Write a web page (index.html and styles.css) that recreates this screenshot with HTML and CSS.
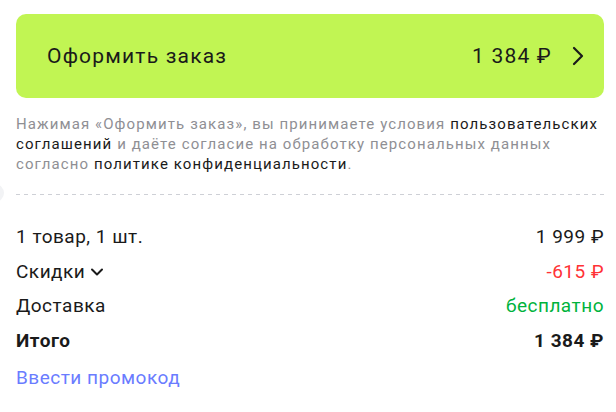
FILE: index.html
```html
<!DOCTYPE html>
<html lang="ru">
<head>
    <meta charset="UTF-8">
    <meta name="viewport" content="width=device-width, initial-scale=1.0">
    <title>Оформление заказа</title>
    <link rel="stylesheet" href="styles.css">
</head>
<body>
 <div class="checkout">
    <button class="checkout-submit" type="button">
        <span class="checkout-submit__title">Оформить заказ</span>
        <span class="checkout-submit__price">1 384 ₽</span>
        <svg class="checkout-submit__arrow" width="12" height="20" viewBox="0 0 12 20">
            <path d="M2 2l8 8-8 8" fill="none" stroke="#1a1a1a" stroke-width="2.2" stroke-linecap="round" stroke-linejoin="round"/>
        </svg>
    </button>

    <p class="checkout-terms">
        Нажимая «Оформить заказ», вы принимаете условия <a href="#">пользовательских соглашений</a>
        и даёте согласие на обработку персональных данных согласно <a href="#">политике конфиденциальности</a>.
    </p>

    <div class="checkout-divider"></div>

    <div class="checkout-summary">
        <div class="checkout-row">
            <span>1 товар, 1 шт.</span>
            <span>1 999 ₽</span>
        </div>
        <div class="checkout-row">
            <span class="checkout-row__toggle">Скидки
                <svg width="14" height="10" viewBox="0 0 14 10">
                    <path d="M2 2.5l5 5 5-5" fill="none" stroke="#1a1a1a" stroke-width="2" stroke-linecap="round" stroke-linejoin="round"/>
                </svg>
            </span>
            <span class="checkout-row__discount">-615 ₽</span>
        </div>
        <div class="checkout-row">
            <span>Доставка</span>
            <span class="checkout-row__free">бесплатно</span>
        </div>
        <div class="checkout-row checkout-row--total">
            <span>Итого</span>
            <span>1 384 ₽</span>
        </div>
    </div>

    <a class="checkout-promo" href="#">Ввести промокод</a>
 </div>
</body>
</html>
```

FILE: styles.css
```css
html,
body {
    margin: 0;
    background: #FFF;
}

body {
    color: #1a1a1a;
    font-family: Roboto, "Noto Sans", sans-serif;
    -webkit-font-smoothing: antialiased;
}

.checkout {
    position: relative;
    padding: 14px 12px 0 16px;
}

.checkout-submit {
    display: flex;
    align-items: center;
    width: 100%;
    height: 84px;
    padding: 0 20px 0 31px;
    border: 0;
    border-radius: 10px;
    background: #C1F553;
    color: #1a1a1a;
    font-family: inherit;
    font-size: 21px;
    letter-spacing: 1.2px;
    cursor: pointer;
}

.checkout-submit__title {
    flex: 1;
    text-align: left;
}

.checkout-submit__arrow {
    margin-left: 20px;
}

.checkout-terms {
    margin: 16px 0 0;
    color: #8f8f94;
    font-size: 15px;
    line-height: 20px;
    letter-spacing: 1.1px;
}

.checkout-terms a {
    color: #1a1a1a;
    text-decoration: none;
}

.checkout-divider {
    margin-top: 20px;
    height: 1px;
    background: repeating-linear-gradient(90deg, #CED0D6 0 4px, transparent 4px 8px);
}

/* the half circle cut into the left edge */
.checkout-divider:before {
    content: "";
    position: absolute;
    left: -14px;
    top: 184px;
    width: 18px;
    height: 18px;
    border-radius: 50%;
    background: #F2F3F5;
}

.checkout-summary {
    display: flex;
    flex-direction: column;
    gap: 10.5px;
    margin-top: 30px;
}

.checkout-row {
    display: flex;
    justify-content: space-between;
    font-size: 19px;
    line-height: 24px;
    letter-spacing: 0.5px;
}

.checkout-row__toggle {
    display: flex;
    align-items: center;
    gap: 5px;
}

.checkout-row__discount {
    color: #FF3236;
}

.checkout-row__free {
    color: #00B33C;
}

.checkout-row--total {
    font-weight: 700;
}

.checkout-promo {
    display: inline-block;
    margin-top: 13px;
    color: #6A7CFF;
    font-size: 19px;
    line-height: 24px;
    letter-spacing: 0.5px;
    text-decoration: none;
}
```
